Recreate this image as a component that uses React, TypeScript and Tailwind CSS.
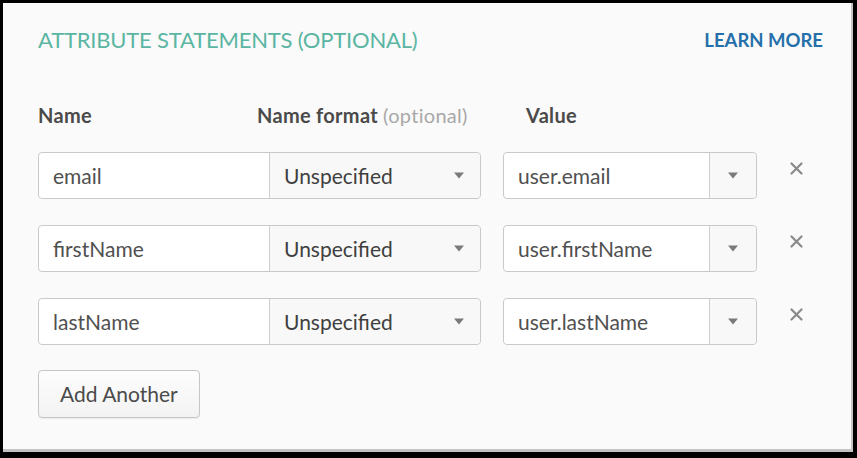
const FONT = { fontFamily: "Lato, 'Open Sans', Arial, sans-serif" };

type Row = { name: string; format: string; value: string };

const ROWS: Row[] = [
  { name: "email", format: "Unspecified", value: "user.email" },
  { name: "firstName", format: "Unspecified", value: "user.firstName" },
  { name: "lastName", format: "Unspecified", value: "user.lastName" },
];

function Caret() {
  return (
    <svg width="10" height="7" viewBox="0 0 10 7" className="shrink-0">
      <path d="M0 0.5 L10 0.5 L5 6.5 Z" fill="#7a7a7a" />
    </svg>
  );
}

function Cross() {
  return (
    <svg width="13" height="13" viewBox="0 0 13 13">
      <path d="M1.5 1.5 L11.5 11.5 M11.5 1.5 L1.5 11.5" stroke="#8a8a8a" strokeWidth="2.2" strokeLinecap="round" />
    </svg>
  );
}

function AttrRow({ row }: { row: Row }) {
  return (
    <div className="flex items-start">
      <div className="flex h-[47px] w-[443px] rounded-[4px] border border-[#c9c9c9] shadow-[inset_0_1px_1px_rgba(0,0,0,0.04)]">
        <div className="flex w-[230px] items-center rounded-l-[4px] bg-white px-[14px] text-[21px] text-[#505050]">
          {row.name}
        </div>
        <div className="flex flex-1 items-center justify-between rounded-r-[4px] border-l border-[#cfcfcf] bg-[#f8f8f8] pl-[14px] pr-[16px] text-[21px] text-[#3f3f3f]">
          {row.format}
          <Caret />
        </div>
      </div>
      <div className="ml-[22px] flex h-[47px] w-[254px] rounded-[4px] border border-[#c9c9c9]">
        <div className="flex flex-1 items-center rounded-l-[4px] bg-white px-[14px] text-[21px] text-[#505050]">
          {row.value}
        </div>
        <div className="flex w-[47px] items-center justify-center rounded-r-[4px] border-l border-[#cfcfcf] bg-[#f8f8f8]">
          <Caret />
        </div>
      </div>
      <div className="ml-[33px] mt-[10px]">
        <Cross />
      </div>
    </div>
  );
}

export default function App() {
  return (
    <div className="h-[458px] w-[857px] bg-black pb-[6px] pl-[3px] pr-[4px] pt-[3px]" style={FONT}>
      <div className="h-full w-full border-b-[3px] border-r-2 border-[#c3c3c3] bg-[#fafafa] pl-[35px] pr-[28px]">
        <div className="flex items-center justify-between pt-[22px]">
          <h2 className="text-[22px] leading-[30px] tracking-[-0.2px] text-[#5ab5a2]">ATTRIBUTE STATEMENTS (OPTIONAL)</h2>
          <a className="text-[18.5px] font-bold leading-[30px] text-[#2570aa]">LEARN MORE</a>
        </div>

        <div className="mt-[47px] flex text-[20px] font-bold leading-[26px] tracking-[0.3px] text-[#4a4a4a]">
          <span className="w-[219px]">Name</span>
          <span className="w-[269px]">
            Name format <span className="font-normal text-[#a8a8a8]">(optional)</span>
          </span>
          <span>Value</span>
        </div>

        <div className="mt-[24px] flex flex-col gap-[26px]">
          {ROWS.map((r) => (
            <AttrRow key={r.name} row={r} />
          ))}
        </div>

        <button className="mt-[25px] h-[48px] rounded-[4px] border border-[#c6c6c6] bg-gradient-to-b from-[#fdfdfd] to-[#f3f3f3] px-[21px] text-[21px] text-[#4a4a4a] shadow-[0_1px_1px_rgba(0,0,0,0.06)]">
          Add Another
        </button>
      </div>
    </div>
  );
}
